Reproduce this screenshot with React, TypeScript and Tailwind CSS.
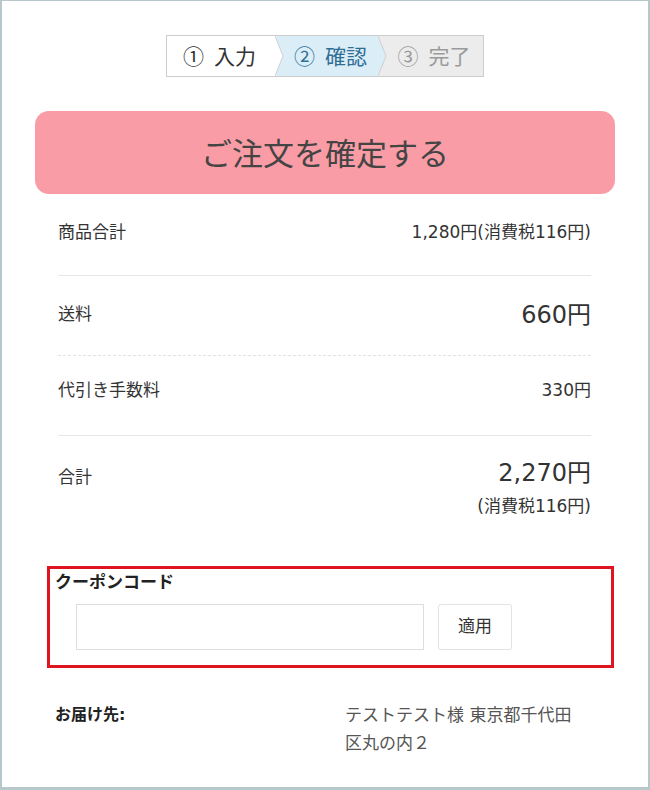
const font = { fontFamily: '"DejaVu Sans", "Noto Sans CJK JP", sans-serif' };
const cjk = { fontFamily: '"Noto Sans CJK JP", sans-serif' };

type Step = { no: string; label: string; bg: string; text: string; fill: string };

const steps: Step[] = [
  { no: "①", label: "入力", bg: "bg-white", text: "text-[#333]", fill: "#ffffff" },
  { no: "②", label: "確認", bg: "bg-[#dbeef7]", text: "text-[#2f6f96]", fill: "#dbeef7" },
  { no: "③", label: "完了", bg: "bg-[#ececec]", text: "text-[#9a9a9a]", fill: "#ececec" },
];

function Chevron({ fill }: { fill: string }) {
  return (
    <svg className="absolute top-0 right-[-8px] z-10" width="9" height="40" viewBox="0 0 9 40">
      <polygon points="0,0 8,20 0,40" fill={fill} />
      <polyline points="0,0 8,20 0,40" fill="none" stroke="#cfcfcf" strokeWidth="1" />
    </svg>
  );
}

function StepBar() {
  return (
    <div className="flex justify-center">
      <div style={cjk} className="flex border border-[#cccccc]">
        {steps.map((s, i) => (
          <div
            key={s.no}
            className={`relative flex h-[40px] items-center justify-center gap-[10px] text-[21px] ${s.bg} ${s.text} ${
              i === 0 ? "w-[109px] pr-[4px]" : i === 1 ? "w-[103px] pl-[6px]" : "w-[104px] pl-[6px]"
            }`}
          >
            <span>{s.no}</span>
            <span>{s.label}</span>
            {i < 2 && <Chevron fill={s.fill} />}
          </div>
        ))}
      </div>
    </div>
  );
}

export default function App() {
  return (
    <div style={font} className="h-[790px] w-[650px] overflow-hidden border-x-2 border-t border-b-[3px] border-[#b7c8ca] bg-white text-[#333]">
      <div className="pt-[34px]">
        <StepBar />
      </div>

      <div style={cjk} className="mx-[33px] mt-[34px] flex h-[83px] items-center justify-center rounded-[14px] bg-[#fa9ca5] text-[31px] text-[#444]">
        ご注文を確定する
      </div>

      <div className="ml-[56px] mr-[57px] text-[17px]">
        <div className="flex h-[82px] items-start justify-between border-b border-[#e6e6e6] pt-[27px] leading-[22px]">
          <span>商品合計</span>
          <span>1,280円(消費税116円)</span>
        </div>
        <div className="flex h-[80px] items-center justify-between border-b border-dashed border-[#e3e3e3] pb-[2px]">
          <span>送料</span>
          <span className="text-[24px]">660円</span>
        </div>
        <div className="flex h-[80px] items-start justify-between border-b border-[#e6e6e6] pt-[23px] leading-[22px]">
          <span>代引き手数料</span>
          <span>330円</span>
        </div>
        <div className="flex items-start justify-between pt-[20px]">
          <span className="pt-[10px] leading-[22px]">合計</span>
          <div className="flex flex-col items-end">
            <span className="text-[24px] leading-[34px]">2,270円</span>
            <span className="mt-[5px] leading-[22px]">(消費税116円)</span>
          </div>
        </div>
      </div>

      <div className="ml-[45px] mr-[34px] mt-[49px] h-[102px] border-[3px] border-[#e0141e] px-[5px] pt-[1px]">
        <div className="text-[17px] font-bold leading-[24px] text-[#222]">クーポンコード</div>
        <div className="mt-[10px] flex gap-[14px] pl-[21px]">
          <div className="h-[46px] w-[348px] border border-[#dddddd] bg-white" />
          <button className="flex h-[46px] w-[74px] items-center justify-center rounded-[3px] border border-[#e3e3e3] bg-white text-[17px] text-[#333]">
            適用
          </button>
        </div>
      </div>

      <div className="ml-[53px] mt-[33px] flex">
        <span className="w-[290px] text-[16px] font-bold leading-[28px] text-[#222]">お届け先:</span>
        <p className="w-[236px] text-[17px] leading-[28px] text-[#555]">
          テストテスト様 東京都千代田区丸の内２
        </p>
      </div>
    </div>
  );
}
